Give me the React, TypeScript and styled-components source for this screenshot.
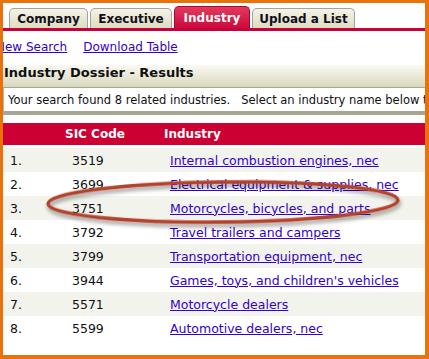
import React from "react";
import styled, { createGlobalStyle } from "styled-components";

const GlobalStyle = createGlobalStyle`
  html, body {
    margin: 0;
    padding: 0;
    background: #ffffff;
  }
  body {
    font-family: "DejaVu Sans", Verdana, sans-serif;
  }
`;

const Frame = styled.div`
  position: relative;
  width: 429px;
  height: 359px;
  box-sizing: border-box;
  border-style: solid;
  border-color: #e8720c;
  border-width: 3px 4px 4px 3px;
  background: #ffffff;
  overflow: hidden;
`;

const TabBar = styled.div`
  display: flex;
  align-items: flex-end;
  gap: 2px;
  padding: 3px 0 0 6px;
  height: 22px;
  border-bottom: 3px solid #c8003c;
`;

const Tab = styled.div<{ $active?: boolean; $w: number }>`
  display: flex;
  align-items: center;
  justify-content: center;
  box-sizing: border-box;
  height: ${(p) => (p.$active ? "22px" : "20px")};
  width: ${(p) => p.$w}px;
  border: 1px solid ${(p) => (p.$active ? "#b0002e" : "#a2a2a2")};
  border-bottom: none;
  border-radius: 5px 5px 0 0;
  background: ${(p) =>
    p.$active
      ? "linear-gradient(#e23a5e, #cc0a3c)"
      : "linear-gradient(#f4f3e6, #dedcc0)"};
  color: ${(p) => (p.$active ? "#ffffff" : "#101020")};
  font-size: 12px;
  font-weight: bold;
  white-space: nowrap;
`;

const LinkRow = styled.div`
  display: flex;
  align-items: center;
  gap: 16px;
  margin-left: -7px;
  padding-top: 9px;
  height: 14px;
  font-size: 12px;
`;

const TextLink = styled.a`
  color: #3300cc;
  text-decoration: underline;
  white-space: nowrap;
`;

const TitleBar = styled.div`
  height: 22px;
  margin-top: 11px;
  padding-left: 1px;
  display: flex;
  align-items: flex-start;
  background: linear-gradient(#fafaf4, #f0efe2 30%, #d8d7bd);
  font-size: 13px;
  font-weight: bold;
  color: #101010;
  white-space: nowrap;
`;

const InfoBox = styled.div`
  height: 23px;
  display: flex;
  align-items: center;
  padding-left: 4px;
  border-top: 1px solid #a8a897;
  border-left: 1px solid #b8b8a8;
  border-bottom: 4px solid #a6a793;
  font-size: 11.5px;
  color: #101010;
  white-space: pre;
`;

const Grid = styled.div`
  margin-top: 8px;
  display: flex;
  flex-direction: column;
`;

const HeadRow = styled.div`
  display: grid;
  grid-template-columns: 62px 99px 1fr;
  align-items: center;
  height: 22px;
  margin-bottom: 3px;
  background: #cc0033;
  color: #ffffff;
  font-size: 12px;
  font-weight: bold;
`;

const Row = styled.div<{ $shade: boolean }>`
  display: grid;
  grid-template-columns: 62px 98px 1fr;
  align-items: center;
  height: 24px;
  padding-left: 7px;
  background: ${(p) => (p.$shade ? "#f3f3ee" : "#ffffff")};
  font-size: 12.5px;
  color: #101010;
  white-space: nowrap;
`;

const Cell = styled.span``;

const Oval = styled.svg`
  position: absolute;
  left: -3px;
  top: -3px;
  pointer-events: none;
`;

const rows = [
  ["3519", "Internal combustion engines, nec"],
  ["3699", "Electrical equipment & supplies, nec"],
  ["3751", "Motorcycles, bicycles, and parts"],
  ["3792", "Travel trailers and campers"],
  ["3799", "Transportation equipment, nec"],
  ["3944", "Games, toys, and children's vehicles"],
  ["5571", "Motorcycle dealers"],
  ["5599", "Automotive dealers, nec"],
];

const App: React.FC = () => {
  return (
    <Frame>
      <GlobalStyle />
      <TabBar>
        <Tab $w={79}>Company</Tab>
        <Tab $w={82}>Executive</Tab>
        <Tab $w={76} $active>Industry</Tab>
        <Tab $w={103}>Upload a List</Tab>
      </TabBar>
      <LinkRow>
        <TextLink>New Search</TextLink>
        <TextLink>Download Table</TextLink>
      </LinkRow>
      <TitleBar>Industry Dossier - Results</TitleBar>
      <InfoBox>
        {"Your search found 8 related industries.   Select an industry name below to view the dossier."}
      </InfoBox>
      <Grid>
        <HeadRow>
          <span />
          <span>SIC Code</span>
          <span>Industry</span>
        </HeadRow>
        {rows.map((r, i) => (
          <Row key={r[0]} $shade={i % 2 === 0}>
            <Cell>{i + 1}.</Cell>
            <Cell>{r[0]}</Cell>
            <TextLink>{r[1]}</TextLink>
          </Row>
        ))}
      </Grid>
      <Oval width="429" height="359" viewBox="0 0 429 359">
        <defs>
          <filter id="sh" x="-10%" y="-50%" width="120%" height="200%">
            <feGaussianBlur in="SourceAlpha" stdDeviation="2" />
            <feOffset dx="1" dy="3" result="b" />
            <feComponentTransfer>
              <feFuncA type="linear" slope="0.45" />
            </feComponentTransfer>
            <feMerge>
              <feMergeNode />
              <feMergeNode in="SourceGraphic" />
            </feMerge>
          </filter>
        </defs>
        <ellipse
          cx="223"
          cy="202"
          rx="175"
          ry="20"
          fill="none"
          stroke="#b2432b"
          strokeWidth="3.5"
          transform="rotate(-0.6 223 202)"
          filter="url(#sh)"
        />
      </Oval>
    </Frame>
  );
};

export default App;
